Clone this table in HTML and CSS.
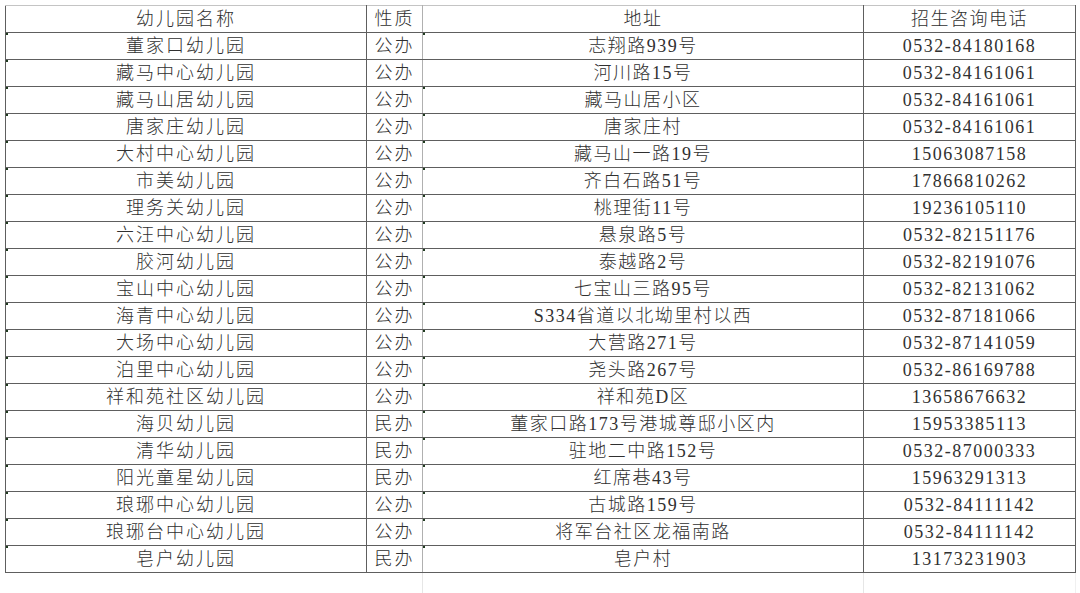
FILE: index.html
```html
<!DOCTYPE html>
<html lang="zh-CN">
<head>
<meta charset="utf-8">
<title>幼儿园招生咨询电话</title>
<link rel="stylesheet" href="styles.css">
</head>
<body>
<table class="sheet">
  <colgroup>
    <col class="w1"><col class="w2"><col class="w3"><col class="w4">
  </colgroup>
  <thead>
    <tr class="head"><th class="c1">幼儿园名称</th><th class="c2">性质</th><th class="c3">地址</th><th class="c4">招生咨询电话</th></tr>
  </thead>
  <tbody>
    <tr><td class="c1 mk">董家口幼儿园</td><td class="c2">公办</td><td class="c3 mk">志翔路939号</td><td class="c4">0532-84180168</td></tr>
    <tr><td class="c1 mk">藏马中心幼儿园</td><td class="c2">公办</td><td class="c3">河川路15号</td><td class="c4">0532-84161061</td></tr>
    <tr><td class="c1 mk">藏马山居幼儿园</td><td class="c2">公办</td><td class="c3 mk">藏马山居小区</td><td class="c4">0532-84161061</td></tr>
    <tr><td class="c1 mk">唐家庄幼儿园</td><td class="c2">公办</td><td class="c3 mk">唐家庄村</td><td class="c4">0532-84161061</td></tr>
    <tr><td class="c1 mk">大村中心幼儿园</td><td class="c2">公办</td><td class="c3 mk">藏马山一路19号</td><td class="c4">15063087158</td></tr>
    <tr><td class="c1 mk">市美幼儿园</td><td class="c2">公办</td><td class="c3 mk">齐白石路51号</td><td class="c4">17866810262</td></tr>
    <tr><td class="c1 mk">理务关幼儿园</td><td class="c2">公办</td><td class="c3 mk">桃理街11号</td><td class="c4">19236105110</td></tr>
    <tr><td class="c1 mk">六汪中心幼儿园</td><td class="c2">公办</td><td class="c3 mk">悬泉路5号</td><td class="c4">0532-82151176</td></tr>
    <tr><td class="c1 mk">胶河幼儿园</td><td class="c2">公办</td><td class="c3 mk">泰越路2号</td><td class="c4">0532-82191076</td></tr>
    <tr><td class="c1 mk">宝山中心幼儿园</td><td class="c2">公办</td><td class="c3 mk">七宝山三路95号</td><td class="c4">0532-82131062</td></tr>
    <tr><td class="c1 mk">海青中心幼儿园</td><td class="c2">公办</td><td class="c3 mk">S334省道以北坳里村以西</td><td class="c4">0532-87181066</td></tr>
    <tr><td class="c1 mk">大场中心幼儿园</td><td class="c2">公办</td><td class="c3 mk">大营路271号</td><td class="c4">0532-87141059</td></tr>
    <tr><td class="c1 mk">泊里中心幼儿园</td><td class="c2">公办</td><td class="c3 mk">尧头路267号</td><td class="c4">0532-86169788</td></tr>
    <tr><td class="c1 mk">祥和苑社区幼儿园</td><td class="c2">公办</td><td class="c3 mk">祥和苑D区</td><td class="c4">13658676632</td></tr>
    <tr><td class="c1 mk">海贝幼儿园</td><td class="c2">民办</td><td class="c3 mk">董家口路173号港城尊邸小区内</td><td class="c4">15953385113</td></tr>
    <tr><td class="c1 mk">清华幼儿园</td><td class="c2">民办</td><td class="c3 mk">驻地二中路152号</td><td class="c4">0532-87000333</td></tr>
    <tr><td class="c1 mk">阳光童星幼儿园</td><td class="c2">民办</td><td class="c3 mk">红席巷43号</td><td class="c4">15963291313</td></tr>
    <tr><td class="c1 mk">琅琊中心幼儿园</td><td class="c2">公办</td><td class="c3 mk">古城路159号</td><td class="c4">0532-84111142</td></tr>
    <tr><td class="c1 mk">琅琊台中心幼儿园</td><td class="c2">公办</td><td class="c3 mk">将军台社区龙福南路</td><td class="c4">0532-84111142</td></tr>
    <tr><td class="c1 mk">皂户幼儿园</td><td class="c2">民办</td><td class="c3 mk">皂户村</td><td class="c4">13173231903</td></tr>
    <tr class="tail"><td class="c1"></td><td class="c2"></td><td class="c3"></td><td class="c4"></td></tr>
  </tbody>
</table>
</body>
</html>
```
FILE: styles.css
```css
html, body {
  margin: 0;
  padding: 0;
  background: #ffffff;
}

body {
  padding: 5px 0 0 5px;
  font-family: "Liberation Serif", "Noto Sans CJK SC", serif;
  color: #303030;
}

.sheet {
  border-collapse: collapse;
  table-layout: fixed;
  width: 1070px;
}

.w1 { width: 361px; }
.w2 { width: 56px; }
.w3 { width: 441px; }
.w4 { width: 212px; }

.sheet th,
.sheet td {
  height: 26px;
  padding: 0;
  text-align: center;
  vertical-align: middle;
  font-size: 18px;
  font-weight: 300;
  letter-spacing: 1.5px;
  line-height: 26px;
  white-space: nowrap;
  border: 1px solid #5e5e5e;
  position: relative;
}

.sheet .c1,
.sheet .c2 {
  letter-spacing: 2px;
}

.head th {
  border-top-color: #c4c4c4;
}

.sheet .c2 {
  border-right-color: #b0b0b0;
}

.mk::before {
  content: "";
  position: absolute;
  left: 0;
  top: 0;
  width: 2px;
  height: 2px;
  background: #1f3a1f;
}

.tail td {
  height: 22px;
  border: none;
}

.tail .c3 {
  border-left: 1px solid #e6e6e6;
}

.tail .c4 {
  border-left: 1px solid #e6e6e6;
  border-right: 1px solid #f0f0f0;
}
```
